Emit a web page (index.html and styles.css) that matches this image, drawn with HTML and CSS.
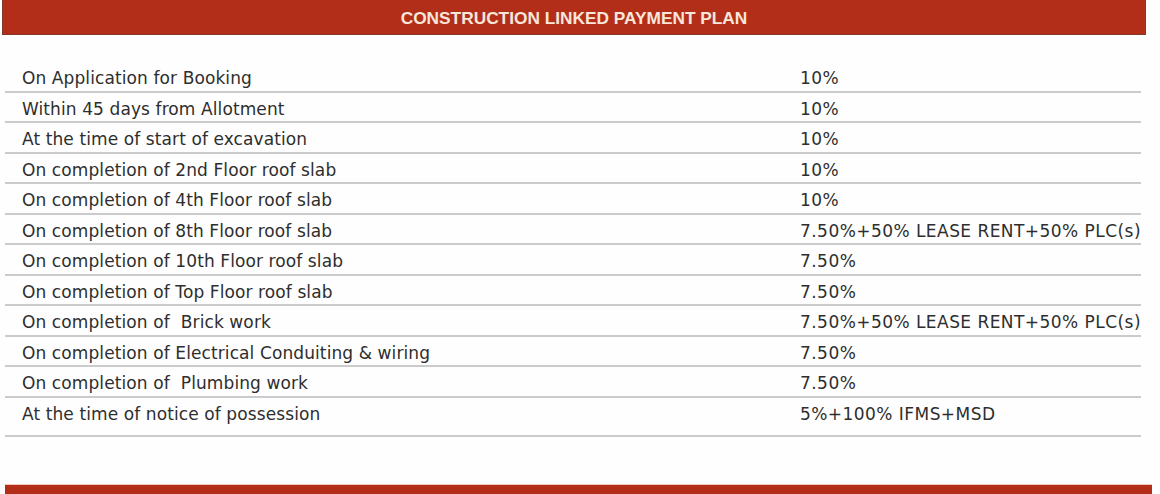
FILE: index.html
```html
<!DOCTYPE html>
<html>
<head>
<meta charset="utf-8">
<link rel="stylesheet" href="styles.css">
</head>
<body>
<div class="page">
  <div class="plan-header">CONSTRUCTION LINKED PAYMENT PLAN</div>
  <div class="plan-table">
    <div class="row"><div class="stage">On Application for Booking</div><div class="amount">10%</div></div>
    <div class="row"><div class="stage">Within 45 days from Allotment</div><div class="amount">10%</div></div>
    <div class="row"><div class="stage">At the time of start of excavation</div><div class="amount">10%</div></div>
    <div class="row"><div class="stage">On completion of 2nd Floor roof slab</div><div class="amount">10%</div></div>
    <div class="row"><div class="stage">On completion of 4th Floor roof slab</div><div class="amount">10%</div></div>
    <div class="row"><div class="stage">On completion of 8th Floor roof slab</div><div class="amount">7.50%+50% LEASE RENT+50% PLC(s)</div></div>
    <div class="row"><div class="stage">On completion of 10th Floor roof slab</div><div class="amount">7.50%</div></div>
    <div class="row"><div class="stage">On completion of Top Floor roof slab</div><div class="amount">7.50%</div></div>
    <div class="row"><div class="stage">On completion of &nbsp;Brick work</div><div class="amount">7.50%+50% LEASE RENT+50% PLC(s)</div></div>
    <div class="row"><div class="stage">On completion of Electrical Conduiting &amp; wiring</div><div class="amount">7.50%</div></div>
    <div class="row"><div class="stage">On completion of &nbsp;Plumbing work</div><div class="amount">7.50%</div></div>
    <div class="row last"><div class="stage">At the time of notice of possession</div><div class="amount">5%+100% IFMS+MSD</div></div>
  </div>
  <div class="next-bar"></div>
</div>
</body>
</html>
```
FILE: styles.css
```css
html, body {
  margin: 0;
  padding: 0;
  background: #fefefe;
}

.page {
  width: 1160px;
  height: 494px;
  overflow: hidden;
  display: flex;
  flex-direction: column;
}

.plan-header {
  margin: 0 14px 0 2px;
  height: 35px;
  box-sizing: border-box;
  background: #b22e18;
  border: 1px solid #80392c;
  border-top: none;
  color: #f7e6da;
  font-family: "Liberation Sans", Arial, sans-serif;
  font-weight: bold;
  font-size: 17.3px;
  display: flex;
  align-items: center;
  justify-content: center;
  padding-top: 3px;
}

.plan-table {
  margin: 27px 0 0 5px;
  width: 1136px;
  display: flex;
  flex-direction: column;
}

.row {
  display: grid;
  grid-template-columns: 795px 1fr;
  height: 30.5px;
  box-sizing: border-box;
  border-bottom: 2px solid #cbcbcd;
  font-family: "DejaVu Sans", Verdana, sans-serif;
  font-size: 17px;
  color: #2e2e2e;
  align-items: center;
  padding-top: 4px;
}

.row.last {
  height: 39px;
  align-items: start;
  padding-top: 6px;
}

.stage {
  padding-left: 17px;
  white-space: nowrap;
  letter-spacing: 0.1px;
}

.amount {
  white-space: nowrap;
  letter-spacing: 0.45px;
}

.next-bar {
  margin: 47px 8px 0 5px;
  flex: 1;
  background: #b22e18;
  border-top: 1px solid #f2c9b8;
}
```
